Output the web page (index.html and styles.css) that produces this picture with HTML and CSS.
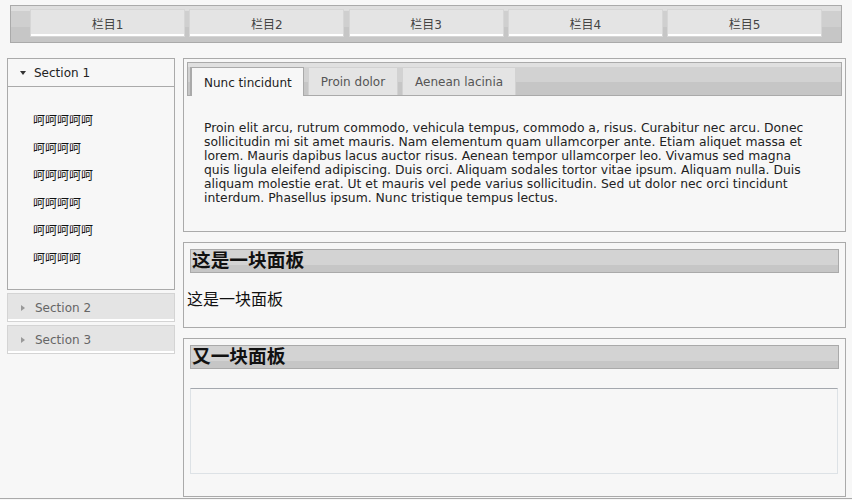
FILE: index.html
```html
<!DOCTYPE html>
<html lang="zh">
<head>
<meta charset="utf-8">
<title>Layout</title>
<link rel="stylesheet" href="styles.css">
</head>
<body>
<div class="page">
  <div class="topbar">
    <div class="navbtn">栏目1</div>
    <div class="navbtn">栏目2</div>
    <div class="navbtn">栏目3</div>
    <div class="navbtn">栏目4</div>
    <div class="navbtn">栏目5</div>
  </div>
  <div class="main">
    <div class="accordion">
      <div class="acc-head acc-open"><span class="tri-down"></span>Section 1</div>
      <ul class="acc-body">
        <li>呵呵呵呵呵</li>
        <li>呵呵呵呵</li>
        <li>呵呵呵呵呵</li>
        <li>呵呵呵呵</li>
        <li>呵呵呵呵呵</li>
        <li>呵呵呵呵</li>
      </ul>
      <div class="acc-head acc-closed"><span class="tri-right"></span>Section 2</div>
      <div class="acc-head acc-closed"><span class="tri-right"></span>Section 3</div>
    </div>
    <div class="content">
      <div class="tabs-panel">
        <div class="tabs-header">
          <div class="tab tab-active">Nunc tincidunt</div>
          <div class="tab">Proin dolor</div>
          <div class="tab">Aenean lacinia</div>
        </div>
        <p class="tab-text">Proin elit arcu, rutrum commodo, vehicula tempus, commodo a, risus. Curabitur nec arcu. Donec sollicitudin mi sit amet mauris. Nam elementum quam ullamcorper ante. Etiam aliquet massa et lorem. Mauris dapibus lacus auctor risus. Aenean tempor ullamcorper leo. Vivamus sed magna quis ligula eleifend adipiscing. Duis orci. Aliquam sodales tortor vitae ipsum. Aliquam nulla. Duis aliquam molestie erat. Ut et mauris vel pede varius sollicitudin. Sed ut dolor nec orci tincidunt interdum. Phasellus ipsum. Nunc tristique tempus lectus.</p>
      </div>
      <div class="panel panel-a">
        <h3 class="panel-title">这是一块面板</h3>
        <p class="panel-text">这是一块面板</p>
      </div>
      <div class="panel panel-b">
        <h3 class="panel-title">又一块面板</h3>
        <div class="panel-frame"></div>
      </div>
    </div>
  </div>
</div>
</body>
</html>
```
FILE: styles.css
```css
html, body {
  margin: 0;
  padding: 0;
  background: #f7f7f7;
}
body {
  font-family: "DejaVu Sans", "Noto Sans CJK SC", sans-serif;
  font-size: 12px;
  color: #222;
}
.page {
  height: 499px;
  border-bottom: 1px solid #aaa;
  box-sizing: border-box;
  overflow: hidden;
}
.topbar {
  margin: 5px 10px 0 10px;
  height: 38px;
  box-sizing: border-box;
  border: 1px solid #aaa;
  background: linear-gradient(#dedede 0, #dedede 5px, #cfcfcf 5px, #cfcfcf 21px, #c6c6c6 21px);
  display: flex;
  gap: 4.25px;
  padding: 3px 0 0 19px;
}
.navbtn {
  width: 155px;
  height: 28px;
  box-sizing: border-box;
  border: 1px solid #d6d6d6;
  background: #e4e4e4;
  box-shadow: inset 0 -2px 0 #fff;
  display: flex;
  align-items: center;
  justify-content: center;
  color: #444;
  font-size: 12px;
}
.main {
  display: flex;
  gap: 8px;
  margin-top: 15px;
  padding-left: 7px;
}
.accordion {
  width: 168px;
  display: flex;
  flex-direction: column;
}
.acc-head {
  height: 29px;
  box-sizing: border-box;
  display: flex;
  align-items: center;
  padding-left: 12px;
  font-size: 12px;
}
.acc-open {
  border: 1px solid #aaa;
  background: #f7f7f7;
  color: #222;
  padding-top: 1px;
}
.acc-closed {
  border: 1px solid #d4d4d4;
  background: #e4e4e4;
  box-shadow: inset 0 -2px 0 #fff;
  color: #666;
  margin-top: 3px;
  height: 29px;
}
.tri-down {
  width: 0;
  height: 0;
  border-left: 3.5px solid transparent;
  border-right: 3.5px solid transparent;
  border-top: 4px solid #333;
  margin-right: 8px;
}
.tri-right {
  width: 0;
  height: 0;
  border-top: 3.5px solid transparent;
  border-bottom: 3.5px solid transparent;
  border-left: 4px solid #999;
  margin: 0 10px 0 1px;
}
.acc-body {
  list-style: none;
  margin: 0;
  padding: 19px 0 16px 25px;
  border: 1px solid #aaa;
  border-top: none;
  height: 203px;
  box-sizing: border-box;
  font-family: "Noto Sans CJK SC", sans-serif;
  font-size: 12px;
  color: #111;
}
.acc-body li {
  line-height: 27.6px;
}
.content {
  width: 663px;
  display: flex;
  flex-direction: column;
  gap: 10px;
}
.tabs-panel {
  height: 174px;
  box-sizing: border-box;
  border: 1px solid #aaa;
  padding: 3px;
}
.tabs-header {
  height: 34px;
  box-sizing: border-box;
  border: 1px solid #aaa;
  background: linear-gradient(#e0e0e0 0, #e0e0e0 4px, #d2d2d2 4px, #d2d2d2 19px, #c6c6c6 19px);
  display: flex;
  align-items: flex-end;
  gap: 4px;
  padding-left: 2px;
}
.tab {
  height: 28px;
  box-sizing: border-box;
  border: 1px solid #d2d2d2;
  border-bottom: none;
  background: #e4e4e4;
  color: #555;
  display: flex;
  align-items: center;
  padding: 1px 12px 0;
  font-size: 12px;
}
.tab-active {
  height: 29px;
  margin-bottom: -1px;
  border: 1px solid #aaa;
  border-left: 2px solid #aaa;
  border-bottom: none;
  background: #f7f7f7;
  color: #222;
  padding: 1px 11px 0 12px;
}
.tab-text {
  margin: 0;
  padding: 25px 30px 0 17px;
  line-height: 14px;
  font-size: 12.37px;
  color: #222;
}
.panel {
  box-sizing: border-box;
  border: 1px solid #aaa;
  padding: 6px 6px 0 6px;
}
.panel-a {
  height: 86px;
}
.panel-b {
  height: 159px;
}
.panel-title {
  margin: 0;
  height: 24px;
  box-sizing: border-box;
  border: 1px solid #aaa;
  background: linear-gradient(#d3d3d3 0, #d3d3d3 15px, #c6c6c6 15px);
  font-family: "Noto Sans CJK SC", serif;
  font-weight: bold;
  font-size: 18.7px;
  line-height: 18px;
  padding-left: 1px;
  color: #111;
}
.panel-text {
  margin: 15px 0 0 -3px;
  font-family: "Noto Sans CJK SC", serif;
  font-size: 16px;
  line-height: 20px;
  color: #111;
}
.panel-frame {
  margin-top: 19px;
  height: 86px;
  box-sizing: border-box;
  border: 1px solid #dde2e6;
  border-top: 1px solid #a4a8ae;
  margin-right: 1px;
}
```
